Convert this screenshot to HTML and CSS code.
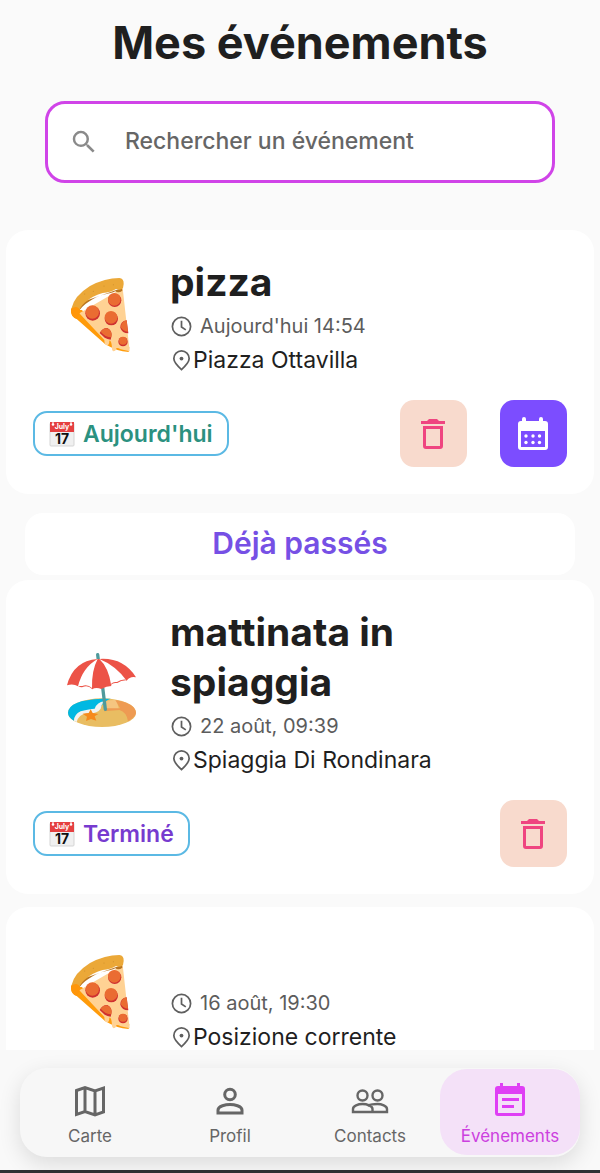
FILE: index.html
```html
<!DOCTYPE html>
<html lang="fr">
<head>
    <meta charset="UTF-8">
    <meta name="viewport" content="width=device-width, initial-scale=1.0">
    <title>Mes événements</title>
    <link rel="stylesheet" href="styles.css">
</head>
<body>
    <!-- Icônes partagées -->
    <svg class="sprite" aria-hidden="true">
        <symbol id="pizza" viewBox="42 51 216 240">
            <path fill="#ff9b0a" d="M63 150 Q62 170 80 177 L165 252 Q200 274 236 276 L238 262 L95 150z"/>
            <path fill="#ffd294" d="M88 160 L218 84 L239 274 L212 268 Q198 260 198 268 Q197 274 191 274 Q185 273 186 262 Q184 240 178 242 Q178 256 170 256 Q163 254 163 240z"/>
            <path fill="#b97420" d="M82 162 Q92 140 115 126 Q140 108 160 104 Q185 100 196 94 Q206 100 217 92 L216 84 L90 128z"/>
            <path fill="#eba838" d="M64 146 Q72 108 120 78 Q165 54 208 54 Q222 56 221 72 L219 84 Q212 93 198 87 Q182 98 158 99 Q130 106 104 128 Q88 142 86 160 Q70 166 64 146z"/>
            <path fill="#ff960a" d="M63 146 Q84 134 90 152 Q88 166 81 177 Q60 170 63 146z"/>
            <g fill="#cf3030">
                <circle cx="194" cy="121" r="20"/><circle cx="128" cy="160" r="22"/><circle cx="184" cy="176" r="20"/>
                <path d="M149 219 Q158 203 172 204 Q188 212 184 230 L182 239 Q172 238 164 233z"/>
                <path d="M230 181 Q211 184 211 203 Q216 220 235 220z"/>
                <circle cx="219" cy="245" r="14"/>
            </g>
            <g fill="#ea6c32">
                <circle cx="193" cy="118" r="19"/><circle cx="127" cy="156" r="20"/><circle cx="183" cy="172" r="19"/>
                <path d="M152 215 Q162 202 174 206 Q188 214 184 232 Q166 232 152 215z"/>
                <path d="M230 181 Q213 184 213 202 Q218 214 234 215z"/>
                <circle cx="219" cy="242" r="12"/>
            </g>
            <g fill="#c98b2b"><circle cx="104" cy="102" r="1.500"/><circle cx="130" cy="94" r="1.500"/><circle cx="162" cy="78" r="1.500"/><circle cx="190" cy="74" r="1.500"/></g>
        </symbol>
        <symbol id="beach" viewBox="42 36 216 240">
            <ellipse cx="156" cy="218" rx="102" ry="43" fill="#e9bd62"/>
            <path fill="#00b8e2" d="M72 242 Q54 232 54 218 Q56 180 156 176 L182 176 Q160 184 152 202 Q146 216 122 212 L98 214 Q78 216 72 242z"/>
            <path fill="#f1f3f2" d="M72 242 Q72 224 92 214 Q120 206 134 206 Q142 186 162 184 Q154 194 152 206 Q142 222 110 220 Q86 224 80 246z"/>
            <path fill="#f5c580" d="M160 190 Q172 178 200 180 L206 206 Q160 216 160 190z"/>
            <path fill="#ee9b53" d="M196 180 Q258 190 258 220 Q256 232 234 244 Q230 216 208 210 L162 214 L164 205 L210 205z"/>
            <path fill="#f68a1c" d="M122 208 L128 219 L145 222 L134 229 L139 242 L123 237 L108 243 L111 230 L98 221 L116 219z"/>
            <path stroke="#4f9a9c" stroke-width="10" stroke-linecap="round" d="M143 44 L145 60 M157 134 L166 208"/>
            <path fill="#fff" d="M51 136 Q76 58 143 57 Q224 55 258 112 L208 132 L154 145 L90 142z"/>
            <g fill="#ec5347">
                <path d="M51 136 Q70 62 143 57 Q98 82 84 139 Q70 130 51 136z"/>
                <path d="M143 57 Q124 92 126 148 Q138 140 154 147 Q170 138 184 138 Q176 82 148 57z"/>
                <path d="M148 57 Q220 52 258 112 Q240 108 230 122 Q196 76 148 57z"/>
                <path d="M84 138 Q94 144 98 141 Q114 134 127 148 L127 145 Q112 131 97 138zM182 137 Q186 127 202 129 Q214 120 231 121 L230 119 Q214 116 201 126 Q187 124 182 134z"/>
            </g>
        </symbol>
        <symbol id="agenda" viewBox="0 0 26 26">
            <rect x="1" y="2" width="24" height="23" rx="1" fill="#f0f0f0" stroke="#d5d5d5"/>
            <path fill="#e54040" d="M1 1h24v10H1z"/>
            <circle cx="4" cy="3.500" r="1.300" fill="#fff"/><circle cx="22" cy="3.500" r="1.300" fill="#fff"/>
            <path stroke="#fff" d="M4 0v3M22 0v3"/>
            <text class="agenda-month" x="13" y="8" text-anchor="middle">July</text>
            <text class="agenda-day" x="13" y="23" text-anchor="middle">17</text>
        </symbol>
        <symbol id="clock" viewBox="0 0 24 24">
            <g fill="none" stroke="#5f5f5f" stroke-width="1.800"><circle cx="12" cy="12" r="9.500"/><path d="M12 6v6.500l4.500 3"/></g>
        </symbol>
        <symbol id="pin" viewBox="0 0 24 24">
            <path fill="none" stroke="#5f5f5f" stroke-width="1.800" d="M12 21.500C7 17 4 13.500 4 10a8 8 0 0 1 16 0c0 3.500-3 7-8 11.500z"/>
            <circle cx="12" cy="10" r="2" fill="#5f5f5f"/>
        </symbol>
        <symbol id="trash" viewBox="0 0 40 40">
            <path fill="#ef4580" d="M7 7h6l2-2h8l2 2h6v3H7z"/>
            <path fill="#ef4580" fill-rule="evenodd" d="M9 12h20v20a3 3 0 0 1-3 3H12a3 3 0 0 1-3-3zM12 15v17h14V15z"/>
        </symbol>
        <symbol id="calendar" viewBox="1 0 40 40">
            <path fill="#fff" fill-rule="evenodd" d="M9 7V5a2 2 0 0 1 4 0v2h13V5a2 2 0 0 1 4 0v2h2a3 3 0 0 1 3 3v23a3 3 0 0 1-3 3H8a3 3 0 0 1-3-3V10a3 3 0 0 1 3-3zM8 17v16h24V17z"/>
            <g fill="#fff"><circle cx="13" cy="22" r="1.700"/><circle cx="20" cy="22" r="1.700"/><circle cx="26.500" cy="22" r="1.700"/><circle cx="13" cy="28.500" r="1.700"/><circle cx="20" cy="28.500" r="1.700"/><circle cx="26.500" cy="28.500" r="1.700"/></g>
        </symbol>
    </svg>

    <div class="app">
        <main class="content">
            <h1>Mes événements</h1>
            <label class="search">
                <svg class="search-icon" viewBox="0 0 24 24" aria-hidden="true"><path fill="#8a8a8a" d="M15.500 14h-.79l-.28-.27A6.471 6.471 0 0 0 16 9.500 6.500 6.500 0 1 0 9.500 16c1.610 0 3.090-.59 4.230-1.570l.27.28v.79l5 4.990L20.490 19l-4.990-5zm-6 0C7.010 14 5 11.990 5 9.500S7.010 5 9.500 5 14 7.010 14 9.500 11.990 14 9.500 14z"/></svg>
                <input type="search" placeholder="Rechercher un événement" aria-label="Rechercher un événement">
            </label>

            <article class="card">
                <div class="card-body">
                    <svg class="emoji"><use href="#pizza"/></svg>
                    <div class="details">
                        <h2>pizza</h2>
                        <p class="date"><svg class="icon"><use href="#clock"/></svg>Aujourd'hui 14:54</p>
                        <p class="place"><svg class="icon"><use href="#pin"/></svg>Piazza Ottavilla</p>
                    </div>
                </div>
                <div class="card-footer">
                    <span class="chip chip-today"><svg class="chip-icon"><use href="#agenda"/></svg>Aujourd'hui</span>
                    <div class="actions">
                        <button class="btn btn-delete" type="button" aria-label="Supprimer"><svg><use href="#trash"/></svg></button>
                        <button class="btn btn-calendar" type="button" aria-label="Calendrier"><svg><use href="#calendar"/></svg></button>
                    </div>
                </div>
            </article>

            <div class="section-title">Déjà passés</div>

            <article class="card">
                <div class="card-body">
                    <svg class="emoji"><use href="#beach"/></svg>
                    <div class="details">
                        <h2>mattinata in spiaggia</h2>
                        <p class="date"><svg class="icon"><use href="#clock"/></svg>22 août, 09:39</p>
                        <p class="place"><svg class="icon"><use href="#pin"/></svg>Spiaggia Di Rondinara</p>
                    </div>
                </div>
                <div class="card-footer">
                    <span class="chip chip-done"><svg class="chip-icon"><use href="#agenda"/></svg>Terminé</span>
                    <div class="actions">
                        <button class="btn btn-delete" type="button" aria-label="Supprimer"><svg><use href="#trash"/></svg></button>
                    </div>
                </div>
            </article>

            <article class="card">
                <div class="card-body">
                    <svg class="emoji"><use href="#pizza"/></svg>
                    <div class="details">
                        <h2></h2>
                        <p class="date"><svg class="icon"><use href="#clock"/></svg>16 août, 19:30</p>
                        <p class="place"><svg class="icon"><use href="#pin"/></svg>Posizione corrente</p>
                    </div>
                </div>
            </article>
        </main>

        <footer class="bottom">
            <nav class="tabs">
                <a class="tab" href="#carte">
                    <svg viewBox="0 0 40 40"><path fill="none" stroke="#666" stroke-width="3" d="M6.500 9.500L15 6.500l10 3.500 8.500-3v24L25 34l-10-3.500-8.500 3zM15 6.500v24M25 10v24"/></svg>
                    Carte
                </a>
                <a class="tab" href="#profil">
                    <svg viewBox="0 0 40 40"><g fill="none" stroke="#666" stroke-width="3"><circle cx="20" cy="13.500" r="5.300"/><path d="M8 32v-3c0-4 8-5.500 12-5.500S32 25 32 29v3z"/></g></svg>
                    Profil
                </a>
                <a class="tab" href="#contacts">
                    <svg viewBox="0 0 40 40"><g fill="none" stroke="#666" stroke-width="2.400"><circle cx="12.500" cy="14.500" r="5"/><circle cx="27.500" cy="14.500" r="5"/><path d="M3 31v-3c0-3 5-5 9.500-5s10 2 10 5v3zM17.500 24.500c3-1 6-1.500 10-1.500S37 25 37 28v3H22.500"/></g></svg>
                    Contacts
                </a>
                <a class="tab active" href="#evenements">
                    <svg viewBox="0 0 40 40"><path fill="#df3ff5" fill-rule="evenodd" d="M10 5V2h3v3h14V2h3v3h2a3 3 0 0 1 3 3v24a3 3 0 0 1-3 3H8a3 3 0 0 1-3-3V8a3 3 0 0 1 3-3zM8 13v19h24V13zM12 17h17v3H12zM12 24h12v3H12z"/></svg>
                    Événements
                </a>
            </nav>
        </footer>
    </div>
</body>
</html>
```
FILE: styles.css
```css
* {
    box-sizing: border-box;
}
body {
    margin: 0;
    background-color: #fafafa;
    color: #1f1f1f;
    font-family: Inter, "Noto Sans", sans-serif;
}
h1, h2, p {
    margin: 0;
}
.sprite {
    display: none;
}
.app {
    display: flex;
    flex-direction: column;
    height: 100vh;
    border-bottom: 3px solid #303033;
}
.content {
    flex: 1;
    min-height: 0;
    overflow: hidden;
    padding: 14px 6px 0;
}
h1 {
    font-size: 45px;
    font-weight: 700;
    line-height: 58px;
    text-align: center;
}
.search {
    display: flex;
    align-items: center;
    height: 82px;
    margin: 29px 39px 47px;
    padding: 0 21px;
    gap: 26px;
    background-color: #fff;
    border: 3px solid #d044e8;
    border-radius: 20px;
}
.search-icon {
    width: 30px;
    height: 30px;
    flex: none;
}
.search input {
    flex: 1;
    min-width: 0;
    padding: 0 0 2px;
    border: none;
    outline: none;
    background: none;
    font-family: inherit;
    font-size: 23px;
    font-weight: 500;
}
.search input::placeholder {
    color: #666;
}
.card {
    margin-bottom: 13px;
    padding: 27px;
    background-color: #fff;
    border-radius: 22px;
}
.card-body {
    display: flex;
    align-items: center;
    gap: 3px;
}
.emoji {
    flex: none;
    width: 72px;
    height: 80px;
    margin: 0 31px;
}
h2 {
    min-height: 50px;
    max-width: 300px;
    margin-bottom: 2px;
    font-size: 39px;
    font-weight: 700;
    line-height: 50px;
}
.date, .place {
    display: flex;
    align-items: center;
    height: 34px;
    line-height: 24px;
}
.date {
    gap: 7px;
    color: #5c5c5c;
    font-size: 20px;
}
.place {
    font-size: 23px;
}
.icon {
    width: 23px;
    height: 23px;
}
.card-footer {
    display: flex;
    align-items: center;
    justify-content: space-between;
    margin-top: 23px;
}
.chip {
    display: flex;
    align-items: center;
    gap: 8px;
    height: 45px;
    padding: 0 14px;
    border: 2px solid #5bb9e4;
    border-radius: 14px;
    font-size: 23px;
    font-weight: 600;
}
.chip-icon {
    width: 26px;
    height: 26px;
}
.chip-today {
    color: #2b9180;
}
.chip-done {
    color: #773bcf;
}
.agenda-month {
    fill: #fff;
    font-size: 7px;
    font-weight: 700;
}
.agenda-day {
    fill: #111;
    font-size: 14px;
    font-weight: 700;
}
.actions {
    display: flex;
    gap: 33px;
}
.btn {
    display: flex;
    align-items: center;
    justify-content: center;
    width: 67px;
    height: 67px;
    padding: 0;
    border: none;
    border-radius: 14px;
    cursor: pointer;
}
.btn svg, .tab svg {
    width: 40px;
    height: 40px;
}
.btn-delete {
    background-color: #f8dacd;
}
.btn-calendar {
    background-color: #7c4dff;
}
.section-title {
    margin: 19px 19px 5px;
    padding-bottom: 2px;
    background-color: #fff;
    border-radius: 18px;
    color: #7650e5;
    font-size: 30px;
    font-weight: 600;
    line-height: 60px;
    text-align: center;
}
.bottom {
    padding: 18px 20px 13px;
    background-color: #f9f9f9;
}
.tabs {
    display: flex;
    height: 89px;
    padding: 1px 0 2px;
    background-color: #f7f7f7;
    border-radius: 27px;
    box-shadow: 0 7px 22px rgba(0, 0, 0, 0.12);
}
.tab {
    display: flex;
    flex: 1;
    flex-direction: column;
    align-items: center;
    gap: 5px;
    padding-top: 12px;
    border-radius: 27px;
    color: #666;
    font-size: 17px;
    line-height: 20px;
    text-decoration: none;
}
.tab.active {
    background-color: #f4e1f8;
    color: #cc3fdf;
}
```
